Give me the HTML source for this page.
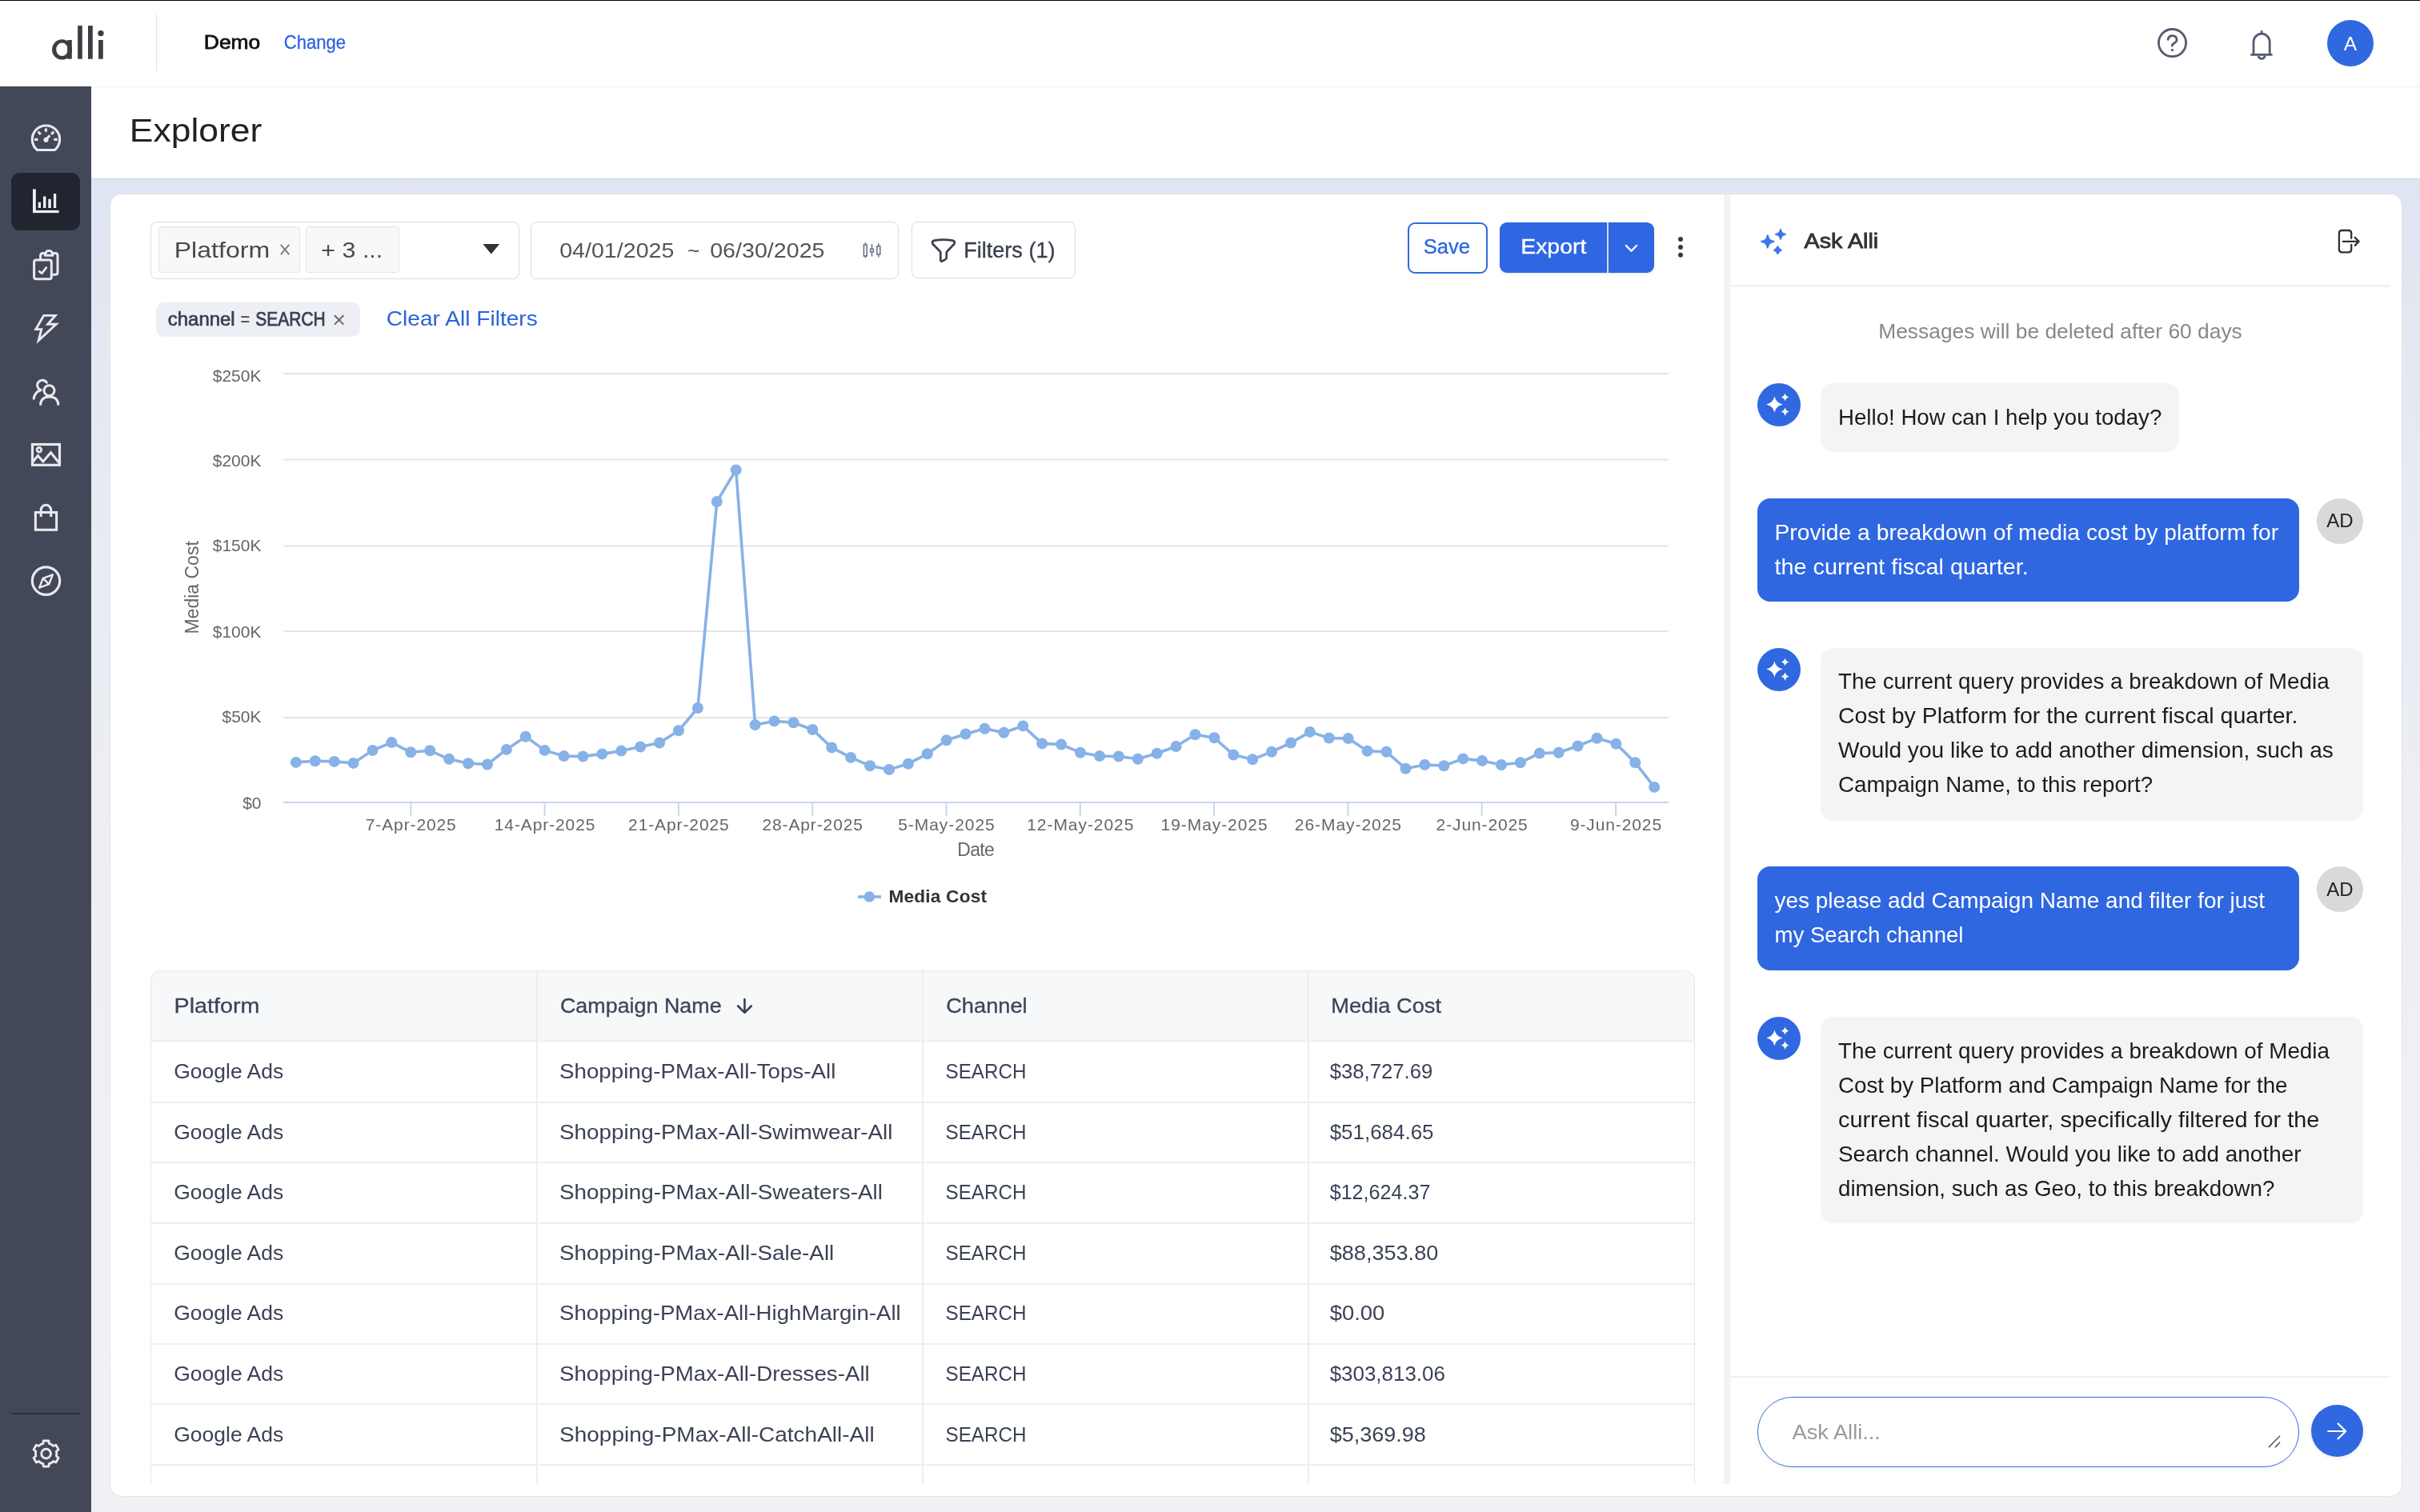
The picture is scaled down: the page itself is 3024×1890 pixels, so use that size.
<!DOCTYPE html>
<html><head><meta charset="utf-8"><title>Explorer - alli</title><style>
*{box-sizing:border-box;margin:0;padding:0}
html,body{width:3024px;height:1890px;overflow:hidden;background:#fff;font-family:"Liberation Sans", sans-serif}
.a{position:absolute}
</style></head>
<body>
<div class="a" style="left:0;top:0;width:3024px;height:1px;background:#000;z-index:5"></div>
<div class="a" style="left:0;top:1px;width:3024px;height:107px;background:#fff;box-shadow:0 1px 3px rgba(0,0,0,0.07);z-index:3"></div>
<div class="a" style="left:195px;top:18px;width:1px;height:71px;background:#E2E2E2;z-index:4"></div>
<div class="a" style="left:0;top:108px;width:114px;height:1782px;background:#434859;z-index:2"></div>
<div class="a" style="left:14px;top:216px;width:86px;height:72px;border-radius:11px;background:#21252F;z-index:2"></div>
<div class="a" style="left:14px;top:1766px;width:86px;height:2px;background:#2C303D;z-index:2"></div>
<div class="a" style="left:114px;top:223px;width:2910px;height:1667px;background:linear-gradient(180deg,#DFE5F1 0px,#E9ECF3 500px,#EFF0F4 1100px,#F0F1F5 1667px);box-shadow:inset 0 1px 1px rgba(0,0,0,0.05)"></div>
<div class="a" style="left:137px;top:242px;width:2865px;height:1629px;background:#fff;border:1px solid #E4E4E6;border-radius:15px"></div>
<!-- toolbar -->
<div class="a" style="left:188px;top:277px;width:461px;height:72px;border:1.5px solid #DCDCDC;border-radius:8px"></div>
<div class="a" style="left:198px;top:283px;width:177px;height:58px;border:1px solid #E4E4E4;background:#F8F8F8;border-radius:4px"></div>
<div class="a" style="left:382px;top:283px;width:117px;height:58px;border:1px solid #E4E4E4;background:#F8F8F8;border-radius:4px"></div>
<div class="a" style="left:663px;top:277px;width:460px;height:72px;border:1.5px solid #DCDCDC;border-radius:8px"></div>
<div class="a" style="left:1139px;top:277px;width:205px;height:71px;border:1.5px solid #DCDCDC;border-radius:8px"></div>
<div class="a" style="left:1758.5px;top:277.5px;width:100px;height:64px;border:2px solid #2F68E0;border-radius:9px"></div>
<div class="a" style="left:1873.5px;top:277.5px;width:193.5px;height:63.5px;background:#2E67E1;border-radius:9px;box-shadow:0 2px 3px rgba(0,0,0,0.08)"></div>
<div class="a" style="left:2008px;top:277.5px;width:1.5px;height:63.5px;background:#D6D9E0"></div>
<div class="a" style="left:195px;top:378px;width:255px;height:43px;background:#EEEFF5;border-radius:10px"></div>
<!-- table -->
<div class="a" style="left:188px;top:1213px;width:1930px;height:642px;border:1.5px solid #E6E7EA;border-bottom:none;border-radius:13px 13px 0 0;overflow:hidden">
  <div class="a" style="left:0;top:0;width:1930px;height:88px;background:#F7F8FA;border-bottom:1.5px solid #E6E7EA"></div>
</div>
<div class="a" style="left:670px;top:1214px;width:2px;height:641px;background:#EDEEF0"></div>
<div class="a" style="left:1152px;top:1214px;width:2px;height:641px;background:#EDEEF0"></div>
<div class="a" style="left:1634px;top:1214px;width:2px;height:641px;background:#EDEEF0"></div>
<div class="a" style="left:189px;top:1377px;width:1928px;height:2px;background:#EEEFF1"></div>
<div class="a" style="left:189px;top:1452px;width:1928px;height:2px;background:#EEEFF1"></div>
<div class="a" style="left:189px;top:1528px;width:1928px;height:2px;background:#EEEFF1"></div>
<div class="a" style="left:189px;top:1604px;width:1928px;height:2px;background:#EEEFF1"></div>
<div class="a" style="left:189px;top:1679px;width:1928px;height:2px;background:#EEEFF1"></div>
<div class="a" style="left:189px;top:1754px;width:1928px;height:2px;background:#EEEFF1"></div>
<div class="a" style="left:189px;top:1830px;width:1928px;height:2px;background:#EEEFF1"></div>
<!-- chat panel -->
<div class="a" style="left:2154px;top:243px;width:8px;height:1612px;background:#F3F3F4"></div>
<div class="a" style="left:2162px;top:355.5px;width:825px;height:2px;background:#F1F1F2;box-shadow:0 1px 2px rgba(0,0,0,0.03)"></div>
<div class="a" style="left:2196px;top:479px;width:54px;height:54px;border-radius:50%;background:#2F68E0"></div>
<div class="a" style="left:2275px;top:479px;width:448px;height:86px;border-radius:16px;background:#F4F4F4"></div>
<div class="a" style="left:2196px;top:623px;width:677px;height:129px;border-radius:16px;background:#2F67E0"></div>
<div class="a" style="left:2895px;top:623px;width:58px;height:57px;border-radius:50%;background:#D9D9D9"></div>
<div class="a" style="left:2196px;top:810px;width:54px;height:54px;border-radius:50%;background:#2F68E0"></div>
<div class="a" style="left:2275px;top:810px;width:678px;height:216px;border-radius:16px;background:#F4F4F4"></div>
<div class="a" style="left:2196px;top:1083px;width:677px;height:130px;border-radius:16px;background:#2F67E0"></div>
<div class="a" style="left:2895px;top:1083px;width:58px;height:57px;border-radius:50%;background:#D9D9D9"></div>
<div class="a" style="left:2196px;top:1271px;width:54px;height:54px;border-radius:50%;background:#2F68E0"></div>
<div class="a" style="left:2275px;top:1271px;width:678px;height:258px;border-radius:16px;background:#F4F4F4"></div>
<div class="a" style="left:2162px;top:1720px;width:825px;height:2px;background:#F0F0F1"></div>
<div class="a" style="left:2196px;top:1746px;width:676.5px;height:87.5px;border:1.5px solid #3A70E2;border-radius:44px;background:#fff;box-shadow:0 2px 5px rgba(0,0,0,0.06)"></div>
<div class="a" style="left:2888px;top:1756px;width:65px;height:65px;border-radius:50%;background:#2F68E0;box-shadow:0 2px 5px rgba(0,0,0,0.08)"></div>
<div class="a" style="left:2908px;top:25px;width:58px;height:58px;border-radius:50%;background:#2F68E0;z-index:4"></div>

<svg class="a" style="left:0;top:0;z-index:10;will-change:transform" width="3024" height="1890" viewBox="0 0 3024 1890" font-family='"Liberation Sans", sans-serif'>
<line x1="354" y1="897.0" x2="2085" y2="897.0" stroke="#E6E6E6" stroke-width="2"/>
<line x1="354" y1="789.0" x2="2085" y2="789.0" stroke="#E6E6E6" stroke-width="2"/>
<line x1="354" y1="682.5" x2="2085" y2="682.5" stroke="#E6E6E6" stroke-width="2"/>
<line x1="354" y1="574.5" x2="2085" y2="574.5" stroke="#E6E6E6" stroke-width="2"/>
<line x1="354" y1="467.0" x2="2085" y2="467.0" stroke="#E6E6E6" stroke-width="2"/>
<line x1="354" y1="1003" x2="2085" y2="1003" stroke="#CCD6EB" stroke-width="2"/>
<line x1="513.3" y1="1003" x2="513.3" y2="1020" stroke="#CCD6EB" stroke-width="2"/>
<text x="513.3" y="1037.5" font-size="21" fill="#666" text-anchor="middle" textLength="113.0" lengthAdjust="spacing">7-Apr-2025</text>
<line x1="680.6" y1="1003" x2="680.6" y2="1020" stroke="#CCD6EB" stroke-width="2"/>
<text x="680.6" y="1037.5" font-size="21" fill="#666" text-anchor="middle" textLength="125.6" lengthAdjust="spacing">14-Apr-2025</text>
<line x1="847.9" y1="1003" x2="847.9" y2="1020" stroke="#CCD6EB" stroke-width="2"/>
<text x="847.9" y="1037.5" font-size="21" fill="#666" text-anchor="middle" textLength="125.6" lengthAdjust="spacing">21-Apr-2025</text>
<line x1="1015.2" y1="1003" x2="1015.2" y2="1020" stroke="#CCD6EB" stroke-width="2"/>
<text x="1015.2" y="1037.5" font-size="21" fill="#666" text-anchor="middle" textLength="125.6" lengthAdjust="spacing">28-Apr-2025</text>
<line x1="1182.5" y1="1003" x2="1182.5" y2="1020" stroke="#CCD6EB" stroke-width="2"/>
<text x="1182.5" y="1037.5" font-size="21" fill="#666" text-anchor="middle" textLength="120.5" lengthAdjust="spacing">5-May-2025</text>
<line x1="1349.8" y1="1003" x2="1349.8" y2="1020" stroke="#CCD6EB" stroke-width="2"/>
<text x="1349.8" y="1037.5" font-size="21" fill="#666" text-anchor="middle" textLength="133.1" lengthAdjust="spacing">12-May-2025</text>
<line x1="1517.1" y1="1003" x2="1517.1" y2="1020" stroke="#CCD6EB" stroke-width="2"/>
<text x="1517.1" y="1037.5" font-size="21" fill="#666" text-anchor="middle" textLength="133.1" lengthAdjust="spacing">19-May-2025</text>
<line x1="1684.4" y1="1003" x2="1684.4" y2="1020" stroke="#CCD6EB" stroke-width="2"/>
<text x="1684.4" y="1037.5" font-size="21" fill="#666" text-anchor="middle" textLength="133.1" lengthAdjust="spacing">26-May-2025</text>
<line x1="1851.7" y1="1003" x2="1851.7" y2="1020" stroke="#CCD6EB" stroke-width="2"/>
<text x="1851.7" y="1037.5" font-size="21" fill="#666" text-anchor="middle" textLength="114.2" lengthAdjust="spacing">2-Jun-2025</text>
<line x1="2019.0" y1="1003" x2="2019.0" y2="1020" stroke="#CCD6EB" stroke-width="2"/>
<text x="2019.0" y="1037.5" font-size="21" fill="#666" text-anchor="middle" textLength="114.2" lengthAdjust="spacing">9-Jun-2025</text>
<text x="326.5" y="1010.5" font-size="21" fill="#666" text-anchor="end">$0</text>
<text x="326.5" y="903.0" font-size="21" fill="#666" text-anchor="end">$50K</text>
<text x="326.5" y="796.5" font-size="21" fill="#666" text-anchor="end">$100K</text>
<text x="326.5" y="689.0" font-size="21" fill="#666" text-anchor="end">$150K</text>
<text x="326.5" y="583.0" font-size="21" fill="#666" text-anchor="end">$200K</text>
<text x="326.5" y="477.0" font-size="21" fill="#666" text-anchor="end">$250K</text>
<text x="0" y="0" font-size="23" fill="#666" text-anchor="middle" transform="translate(247.5 734.4) rotate(-90)">Media Cost</text>
<text x="1219.5" y="1070" font-size="23" fill="#666" text-anchor="middle" textLength="46.5" lengthAdjust="spacing">Date</text>
<path d="M369.9 952.9 L393.8 951.2 L417.7 951.9 L441.6 953.9 L465.5 938.0 L489.4 928.1 L513.3 940.3 L537.2 938.3 L561.1 948.8 L585.1 954.2 L609.0 955.5 L632.9 936.9 L656.8 920.8 L680.7 937.9 L704.6 945.1 L728.5 945.5 L752.4 942.4 L776.3 938.6 L800.2 933.5 L824.1 928.5 L848.0 913.3 L871.9 885.0 L895.8 627.0 L919.7 587.4 L943.6 906.1 L967.5 901.4 L991.5 903.2 L1015.4 912.0 L1039.3 934.4 L1063.2 946.9 L1087.1 957.3 L1111.0 961.9 L1134.9 954.7 L1158.8 942.3 L1182.7 925.3 L1206.6 917.5 L1230.5 910.7 L1254.4 915.7 L1278.3 907.4 L1302.2 929.4 L1326.1 930.6 L1350.0 940.7 L1374.0 945.1 L1397.9 945.5 L1421.8 948.8 L1445.7 941.8 L1469.6 933.0 L1493.5 918.2 L1517.4 922.3 L1541.3 943.5 L1565.2 949.3 L1589.1 939.7 L1613.0 928.6 L1636.9 914.9 L1660.8 922.5 L1684.7 923.1 L1708.6 938.8 L1732.5 939.7 L1756.4 960.8 L1780.4 955.9 L1804.3 957.2 L1828.2 948.4 L1852.1 950.9 L1876.0 956.0 L1899.9 953.2 L1923.8 941.6 L1947.7 940.7 L1971.6 932.5 L1995.5 922.8 L2019.4 929.8 L2043.3 953.2 L2067.2 983.9" fill="none" stroke="#87B2E7" stroke-width="3.6" stroke-linejoin="round" stroke-linecap="round"/>
<circle cx="369.9" cy="952.9" r="7" fill="#87B2E7"/>
<circle cx="393.8" cy="951.2" r="7" fill="#87B2E7"/>
<circle cx="417.7" cy="951.9" r="7" fill="#87B2E7"/>
<circle cx="441.6" cy="953.9" r="7" fill="#87B2E7"/>
<circle cx="465.5" cy="938.0" r="7" fill="#87B2E7"/>
<circle cx="489.4" cy="928.1" r="7" fill="#87B2E7"/>
<circle cx="513.3" cy="940.3" r="7" fill="#87B2E7"/>
<circle cx="537.2" cy="938.3" r="7" fill="#87B2E7"/>
<circle cx="561.1" cy="948.8" r="7" fill="#87B2E7"/>
<circle cx="585.1" cy="954.2" r="7" fill="#87B2E7"/>
<circle cx="609.0" cy="955.5" r="7" fill="#87B2E7"/>
<circle cx="632.9" cy="936.9" r="7" fill="#87B2E7"/>
<circle cx="656.8" cy="920.8" r="7" fill="#87B2E7"/>
<circle cx="680.7" cy="937.9" r="7" fill="#87B2E7"/>
<circle cx="704.6" cy="945.1" r="7" fill="#87B2E7"/>
<circle cx="728.5" cy="945.5" r="7" fill="#87B2E7"/>
<circle cx="752.4" cy="942.4" r="7" fill="#87B2E7"/>
<circle cx="776.3" cy="938.6" r="7" fill="#87B2E7"/>
<circle cx="800.2" cy="933.5" r="7" fill="#87B2E7"/>
<circle cx="824.1" cy="928.5" r="7" fill="#87B2E7"/>
<circle cx="848.0" cy="913.3" r="7" fill="#87B2E7"/>
<circle cx="871.9" cy="885.0" r="7" fill="#87B2E7"/>
<circle cx="895.8" cy="627.0" r="7" fill="#87B2E7"/>
<circle cx="919.7" cy="587.4" r="7" fill="#87B2E7"/>
<circle cx="943.6" cy="906.1" r="7" fill="#87B2E7"/>
<circle cx="967.5" cy="901.4" r="7" fill="#87B2E7"/>
<circle cx="991.5" cy="903.2" r="7" fill="#87B2E7"/>
<circle cx="1015.4" cy="912.0" r="7" fill="#87B2E7"/>
<circle cx="1039.3" cy="934.4" r="7" fill="#87B2E7"/>
<circle cx="1063.2" cy="946.9" r="7" fill="#87B2E7"/>
<circle cx="1087.1" cy="957.3" r="7" fill="#87B2E7"/>
<circle cx="1111.0" cy="961.9" r="7" fill="#87B2E7"/>
<circle cx="1134.9" cy="954.7" r="7" fill="#87B2E7"/>
<circle cx="1158.8" cy="942.3" r="7" fill="#87B2E7"/>
<circle cx="1182.7" cy="925.3" r="7" fill="#87B2E7"/>
<circle cx="1206.6" cy="917.5" r="7" fill="#87B2E7"/>
<circle cx="1230.5" cy="910.7" r="7" fill="#87B2E7"/>
<circle cx="1254.4" cy="915.7" r="7" fill="#87B2E7"/>
<circle cx="1278.3" cy="907.4" r="7" fill="#87B2E7"/>
<circle cx="1302.2" cy="929.4" r="7" fill="#87B2E7"/>
<circle cx="1326.1" cy="930.6" r="7" fill="#87B2E7"/>
<circle cx="1350.0" cy="940.7" r="7" fill="#87B2E7"/>
<circle cx="1374.0" cy="945.1" r="7" fill="#87B2E7"/>
<circle cx="1397.9" cy="945.5" r="7" fill="#87B2E7"/>
<circle cx="1421.8" cy="948.8" r="7" fill="#87B2E7"/>
<circle cx="1445.7" cy="941.8" r="7" fill="#87B2E7"/>
<circle cx="1469.6" cy="933.0" r="7" fill="#87B2E7"/>
<circle cx="1493.5" cy="918.2" r="7" fill="#87B2E7"/>
<circle cx="1517.4" cy="922.3" r="7" fill="#87B2E7"/>
<circle cx="1541.3" cy="943.5" r="7" fill="#87B2E7"/>
<circle cx="1565.2" cy="949.3" r="7" fill="#87B2E7"/>
<circle cx="1589.1" cy="939.7" r="7" fill="#87B2E7"/>
<circle cx="1613.0" cy="928.6" r="7" fill="#87B2E7"/>
<circle cx="1636.9" cy="914.9" r="7" fill="#87B2E7"/>
<circle cx="1660.8" cy="922.5" r="7" fill="#87B2E7"/>
<circle cx="1684.7" cy="923.1" r="7" fill="#87B2E7"/>
<circle cx="1708.6" cy="938.8" r="7" fill="#87B2E7"/>
<circle cx="1732.5" cy="939.7" r="7" fill="#87B2E7"/>
<circle cx="1756.4" cy="960.8" r="7" fill="#87B2E7"/>
<circle cx="1780.4" cy="955.9" r="7" fill="#87B2E7"/>
<circle cx="1804.3" cy="957.2" r="7" fill="#87B2E7"/>
<circle cx="1828.2" cy="948.4" r="7" fill="#87B2E7"/>
<circle cx="1852.1" cy="950.9" r="7" fill="#87B2E7"/>
<circle cx="1876.0" cy="956.0" r="7" fill="#87B2E7"/>
<circle cx="1899.9" cy="953.2" r="7" fill="#87B2E7"/>
<circle cx="1923.8" cy="941.6" r="7" fill="#87B2E7"/>
<circle cx="1947.7" cy="940.7" r="7" fill="#87B2E7"/>
<circle cx="1971.6" cy="932.5" r="7" fill="#87B2E7"/>
<circle cx="1995.5" cy="922.8" r="7" fill="#87B2E7"/>
<circle cx="2019.4" cy="929.8" r="7" fill="#87B2E7"/>
<circle cx="2043.3" cy="953.2" r="7" fill="#87B2E7"/>
<circle cx="2067.2" cy="983.9" r="7" fill="#87B2E7"/>
<line x1="1072" y1="1121" x2="1101" y2="1121" stroke="#87B2E7" stroke-width="3.6"/>
<circle cx="1086.4" cy="1121" r="6.8" fill="#87B2E7"/>
<text x="1110.5" y="1127.9" font-size="22.7" font-weight="700" fill="#333" textLength="122.5" lengthAdjust="spacing">Media Cost</text>
<g fill="#3C3D42"><path fill-rule="evenodd" d="M77.5 49.3 A12.45 12.65 0 1 0 77.5 74.6 A12.45 12.65 0 1 0 77.5 49.3 Z M77.5 53.6 A7.3 8.25 0 1 1 77.5 70.1 A7.3 8.25 0 1 1 77.5 53.6 Z"/><rect x="84.2" y="50" width="5.6" height="23.7"/><rect x="97.1" y="32.1" width="5.7" height="41.6"/><rect x="110" y="32.1" width="5.8" height="41.6"/><rect x="123.1" y="50" width="5.7" height="23.7"/><circle cx="125.95" cy="41.6" r="3.7"/></g>
<g fill="none" stroke="#E8E9EE" stroke-width="3.1" stroke-linecap="butt" stroke-linejoin="round"><path d="M46.6 187.5 A17.2 17.2 0 1 1 68.3 187.5 Z"/><path d="M57.4 160.5 V164.8 M47.6 164.6 L50.8 167.8 M67.3 164.6 L64.1 167.8 M43 174.4 H47.4 M67.4 174.4 H71.8"/><path d="M57.4 174.6 L62.3 169.3" stroke-width="3"/></g><circle cx="57.5" cy="174.8" r="3.1" fill="#E8E9EE"/><g fill="#EEEFF3"><rect x="41" y="236.4" width="3.8" height="29.7"/><rect x="41" y="262.9" width="32.6" height="3.2"/><rect x="47.7" y="252.7" width="3.3" height="7.3"/><rect x="54" y="245.5" width="3.4" height="14.5"/><rect x="60.3" y="248.8" width="3.5" height="11.2"/><rect x="66.9" y="242" width="3.3" height="18"/></g><g fill="none" stroke="#E8E9EE" stroke-width="3" stroke-linejoin="round" stroke-linecap="round"><path d="M50.6 323.4 V319.5 Q50.6 316.5 53.6 316.5 H56.2 M66 316.5 H69 Q72 316.5 72 319.5 V340.2 Q72 343.2 69 343.2 H65.8"/><path d="M56.2 319.2 L57.6 315.2 Q58.3 313.6 60 313.6 H62.3 Q64 313.6 64.7 315.2 L66.1 319.2 Z"/><rect x="42.6" y="324.9" width="21.7" height="23.9" rx="2.5"/><path d="M49.2 339.3 L52.3 341.6 L57.8 334.6" stroke-width="2.8"/><path d="M54.7 394.4 H69.2 L59.6 405.2 H70.2 L48.2 425.6 L51.8 411.6 H44.8 Z" stroke-linejoin="miter" stroke-miterlimit="4" stroke-width="2.9"/><path d="M58.4 478.3 A6.3 6.3 0 1 0 51.2 487.5 Q43.2 490 42.2 498.2" stroke-width="3"/><circle cx="61.5" cy="488.2" r="6.5"/><path d="M50.6 505.4 Q51.5 496 61.7 496 Q71.9 496 72.8 505.4"/><rect x="40.5" y="555.5" width="34" height="25.8" stroke-linejoin="miter" stroke-width="3.2"/><circle cx="48.9" cy="562.3" r="2.8" stroke-width="2.8"/><path d="M41.3 577 L47.4 569.6 L53.8 577 L63.5 565.7 L73.8 578.5" stroke-linejoin="miter" stroke-linecap="butt"/><rect x="44.35" y="640.5" width="26.3" height="21.8" stroke-linejoin="miter" stroke-width="3.1"/><path d="M51.2 645.9 V637.6 A6.25 6.25 0 0 1 63.7 637.6 V645.9" stroke-linecap="butt"/><circle cx="57.5" cy="726.1" r="17.2" stroke-width="3.2"/><path d="M49.2 734.6 L53.8 722.8 L65.8 718.4 L61.2 730.2 Z M54.2 723.2 L60.8 729.8" stroke-width="2.5"/><path d="M53.85 1804.44 L54.33 1801.03 L60.87 1801.03 L61.35 1804.44 A13.2 13.2 0 0 1 66.69 1807.53 L69.88 1806.23 L73.15 1811.90 L70.44 1814.02 A13.2 13.2 0 0 1 70.44 1820.18 L73.15 1822.30 L69.88 1827.97 L66.69 1826.67 A13.2 13.2 0 0 1 61.35 1829.76 L60.87 1833.17 L54.33 1833.17 L53.85 1829.76 A13.2 13.2 0 0 1 48.51 1826.67 L45.32 1827.97 L42.05 1822.30 L44.76 1820.18 A13.2 13.2 0 0 1 44.76 1814.02 L42.05 1811.90 L45.32 1806.23 L48.51 1807.53 A13.2 13.2 0 0 1 53.85 1804.44 Z" stroke-width="2.9"/><circle cx="57.6" cy="1817.1" r="5.9" stroke-width="2.9"/></g>
<g fill="none" stroke="#555B70" stroke-width="2.8" stroke-linecap="round" stroke-linejoin="round"><circle cx="2714.5" cy="53.6" r="17.1"/><path d="M2709.1 49.3 Q2709.8 44.6 2714.7 44.6 Q2719.9 44.8 2720 49.6 Q2720 52.4 2716.8 54 Q2714.3 55.3 2714.3 57.2"/><path d="M2816 68 V52.3 A10.1 10.1 0 0 1 2836.2 52.3 V68 M2812.4 68.4 H2839.6 M2826.1 42 V38.2" stroke-linecap="butt"/><path d="M2822.2 69.5 A3.9 3.9 0 0 0 2830 69.5" stroke-linecap="butt"/></g><circle cx="2714.5" cy="62.6" r="1.7" fill="#555B70"/>
<path d="M350.8 305.8 L361.3 318.2 M361.3 305.8 L350.8 318.2" stroke="#777" stroke-width="1.8" fill="none"/>
<path d="M603.4 305 H624.2 L613.8 317.6 Z" fill="#333"/>
<g fill="none" stroke="#6B7390" stroke-width="1.6"><rect x="1079.4" y="306" width="3.8" height="14"/><path d="M1081.3 303.3 V306 M1081.3 320 V322.6"/><rect x="1087.6" y="311.2" width="3.8" height="3.6"/><path d="M1089.5 305.2 V311.2 M1089.5 314.8 V320.5"/><rect x="1095.8" y="307.8" width="4" height="10"/><path d="M1097.8 304.3 V307.8 M1097.8 317.8 V321.6"/></g>
<path d="M1167.5 300.6 Q1164.6 301.2 1165.2 304.2 Q1165.5 305 1166.3 305.8 L1174.6 314.3 Q1175.3 315 1175.3 316 V325 Q1175.5 327.3 1177.6 326.3 L1180.9 324.6 Q1182.8 323.6 1182.8 321.4 V316 Q1182.8 315 1183.5 314.3 L1191.6 305.8 Q1192.4 305 1192.7 304.2 Q1193.3 301.2 1190.4 300.6 Q1179 298.6 1167.5 300.6 Z" fill="none" stroke="#3A3F52" stroke-width="2.7" stroke-linejoin="round"/>
<path d="M2031.2 306.3 L2038.5 313.6 L2045.8 306.3" fill="none" stroke="#fff" stroke-width="2.2"/>
<g fill="#3A3A3A"><circle cx="2100" cy="299.1" r="3"/><circle cx="2100" cy="309" r="3"/><circle cx="2100" cy="318.8" r="3"/></g>
<path d="M418 394.3 L429.3 405.6 M429.3 394.3 L418 405.6" stroke="#666" stroke-width="2" fill="none"/>
<path d="M930.5 1249 V1265.6 M922.2 1257.5 L930.5 1265.8 L938.8 1257.5" fill="none" stroke="#3A3F52" stroke-width="2.6" stroke-linecap="round" stroke-linejoin="round"/>
<g fill="#3A78EA" stroke="#3A78EA" stroke-width="2.2" stroke-linejoin="round"><path d="M2208.8 294.29999999999995 Q2209.5600000000004 301.14 2216.4 301.9 Q2209.5600000000004 302.65999999999997 2208.8 309.5 Q2208.04 302.65999999999997 2201.2000000000003 301.9 Q2208.04 301.14 2208.8 294.29999999999995 Z"/><path d="M2225 287.2 Q2225.58 292.33 2230.8 292.9 Q2225.58 293.46999999999997 2225 298.59999999999997 Q2224.42 293.46999999999997 2219.2 292.9 Q2224.42 292.33 2225 287.2 Z"/><path d="M2221.4 308.4 Q2222.346 311.75399999999996 2225.7000000000003 312.7 Q2222.346 313.646 2221.4 317.0 Q2220.454 313.646 2217.1 312.7 Q2220.454 311.75399999999996 2221.4 308.4 Z"/></g>
<path d="M2938.2 297.8 V291.6 Q2938.2 288 2934.6 288 H2926.5 Q2922.9 288 2922.9 291.6 V311.8 Q2922.9 315.4 2926.5 315.4 H2934.6 Q2938.2 315.4 2938.2 311.8 V306 M2927.9 301.9 H2947.3 M2942.7 296.9 L2947.6 301.9 L2942.7 306.9" fill="none" stroke="#333" stroke-width="2.3" stroke-linecap="round" stroke-linejoin="round"/>
<g fill="#fff"><path d="M2217.4 495.4 Q2219.254 503.59999999999997 2227.7000000000003 505.4 Q2219.254 507.2 2217.4 515.4 Q2215.5460000000003 507.2 2207.1 505.4 Q2215.5460000000003 503.59999999999997 2217.4 495.4 Z"/><path d="M2230.6 491.4 Q2231.464 495.5 2235.4 496.4 Q2231.464 497.29999999999995 2230.6 501.4 Q2229.736 497.29999999999995 2225.7999999999997 496.4 Q2229.736 495.5 2230.6 491.4 Z"/><path d="M2230.6 509.20000000000005 Q2231.554 513.628 2235.9 514.6 Q2231.554 515.572 2230.6 520.0 Q2229.6459999999997 515.572 2225.2999999999997 514.6 Q2229.6459999999997 513.628 2230.6 509.20000000000005 Z"/></g>
<g fill="#fff"><path d="M2217.4 826.3999999999999 Q2219.254 834.5999999999999 2227.7000000000003 836.3999999999999 Q2219.254 838.1999999999998 2217.4 846.3999999999999 Q2215.5460000000003 838.1999999999998 2207.1 836.3999999999999 Q2215.5460000000003 834.5999999999999 2217.4 826.3999999999999 Z"/><path d="M2230.6 822.3999999999999 Q2231.464 826.4999999999999 2235.4 827.3999999999999 Q2231.464 828.2999999999998 2230.6 832.3999999999999 Q2229.736 828.2999999999998 2225.7999999999997 827.3999999999999 Q2229.736 826.4999999999999 2230.6 822.3999999999999 Z"/><path d="M2230.6 840.1999999999999 Q2231.554 844.6279999999999 2235.9 845.5999999999999 Q2231.554 846.5719999999999 2230.6 850.9999999999999 Q2229.6459999999997 846.5719999999999 2225.2999999999997 845.5999999999999 Q2229.6459999999997 844.6279999999999 2230.6 840.1999999999999 Z"/></g>
<g fill="#fff"><path d="M2217.4 1287.4 Q2219.254 1295.6000000000001 2227.7000000000003 1297.4 Q2219.254 1299.2 2217.4 1307.4 Q2215.5460000000003 1299.2 2207.1 1297.4 Q2215.5460000000003 1295.6000000000001 2217.4 1287.4 Z"/><path d="M2230.6 1283.4 Q2231.464 1287.5 2235.4 1288.4 Q2231.464 1289.3000000000002 2230.6 1293.4 Q2229.736 1289.3000000000002 2225.7999999999997 1288.4 Q2229.736 1287.5 2230.6 1283.4 Z"/><path d="M2230.6 1301.1999999999998 Q2231.554 1305.628 2235.9 1306.6 Q2231.554 1307.572 2230.6 1312.0 Q2229.6459999999997 1307.572 2225.2999999999997 1306.6 Q2229.6459999999997 1305.628 2230.6 1301.1999999999998 Z"/></g>
<path d="M2909.2 1789 H2931 M2921.6 1779.5 L2931.2 1789 L2921.6 1798.4" fill="none" stroke="#fff" stroke-width="2.2" stroke-linecap="round" stroke-linejoin="round"/>
<path d="M2835.3 1808.8 L2848.6 1795.3 M2843.4 1808.8 L2848.6 1803.2" fill="none" stroke="#555" stroke-width="1.6" stroke-linecap="round"/>
<text x="254.8" y="60.8" font-size="24.5" fill="#111" textLength="70.5" lengthAdjust="spacingAndGlyphs" stroke="#111" stroke-width="0.8">Demo</text><text x="354.8" y="60.8" font-size="24.5" fill="#2F62E0" textLength="77.3" lengthAdjust="spacingAndGlyphs" stroke="#2F62E0" stroke-width="0.3">Change</text><text x="2937.0" y="62.5" font-size="24.5" fill="#fff" text-anchor="middle">A</text><text x="161.8" y="177.0" font-size="41.5" fill="#222" textLength="165.5" lengthAdjust="spacingAndGlyphs">Explorer</text><text x="217.7" y="321.8" font-size="27.3" fill="#4A4A4A" textLength="119.6" lengthAdjust="spacingAndGlyphs">Platform</text><text x="401.2" y="321.8" font-size="27.3" fill="#4A4A4A" textLength="77.1" lengthAdjust="spacingAndGlyphs">+ 3 ...</text><text x="699.2" y="321.5" font-size="26" fill="#555" textLength="143.2" lengthAdjust="spacingAndGlyphs">04/01/2025</text><text x="859.0" y="321.5" font-size="26" fill="#555">~</text><text x="887.2" y="321.5" font-size="26" fill="#555" textLength="143.3" lengthAdjust="spacingAndGlyphs">06/30/2025</text><text x="1204.2" y="321.5" font-size="27" fill="#3A3F4F" textLength="114.3" lengthAdjust="spacingAndGlyphs" stroke="#3A3F4F" stroke-width="0.35">Filters (1)</text><text x="1778.8" y="317.2" font-size="25.7" fill="#2F68E0" textLength="58.3" lengthAdjust="spacingAndGlyphs" stroke="#2F68E0" stroke-width="0.35">Save</text><text x="1900.2" y="317.2" font-size="25.7" fill="#fff" textLength="82.1" lengthAdjust="spacingAndGlyphs" stroke="#fff" stroke-width="0.35">Export</text><text x="209.8" y="406.8" font-size="23" fill="#3A3F52" textLength="83.9" lengthAdjust="spacingAndGlyphs" stroke="#3A3F52" stroke-width="0.7">channel</text><text x="300.3" y="406.8" font-size="23" fill="#3A3F52" textLength="12.1" lengthAdjust="spacingAndGlyphs">=</text><text x="319.3" y="406.8" font-size="23" fill="#3A3F52" textLength="87.4" lengthAdjust="spacingAndGlyphs" stroke="#3A3F52" stroke-width="0.75">SEARCH</text><text x="482.7" y="407.0" font-size="26" fill="#2A62D9" textLength="189.1" lengthAdjust="spacingAndGlyphs">Clear All Filters</text><text x="217.6" y="1266.0" font-size="25.7" fill="#3D4459" textLength="106.9" lengthAdjust="spacingAndGlyphs" stroke="#3D4459" stroke-width="0.3">Platform</text><text x="699.9" y="1266.0" font-size="25.7" fill="#3D4459" textLength="201.8" lengthAdjust="spacingAndGlyphs" stroke="#3D4459" stroke-width="0.3">Campaign Name</text><text x="1182.2" y="1266.0" font-size="25.7" fill="#3D4459" textLength="101.5" lengthAdjust="spacingAndGlyphs" stroke="#3D4459" stroke-width="0.3">Channel</text><text x="1663.2" y="1266.0" font-size="25.7" fill="#3D4459" textLength="137.8" lengthAdjust="spacingAndGlyphs" stroke="#3D4459" stroke-width="0.3">Media Cost</text><text x="217.2" y="1348.0" font-size="25.7" fill="#3B4256" textLength="137.1" lengthAdjust="spacingAndGlyphs">Google Ads</text><text x="699.0" y="1348.0" font-size="25.7" fill="#3B4256" textLength="345.3" lengthAdjust="spacingAndGlyphs">Shopping-PMax-All-Tops-All</text><text x="1181.6" y="1348.0" font-size="25.7" fill="#3B4256" textLength="100.8" lengthAdjust="spacingAndGlyphs">SEARCH</text><text x="1661.7" y="1348.0" font-size="25.7" fill="#3B4256" textLength="128.6" lengthAdjust="spacingAndGlyphs">$38,727.69</text><text x="217.2" y="1423.6" font-size="25.7" fill="#3B4256" textLength="137.1" lengthAdjust="spacingAndGlyphs">Google Ads</text><text x="699.0" y="1423.6" font-size="25.7" fill="#3B4256" textLength="416.4" lengthAdjust="spacingAndGlyphs">Shopping-PMax-All-Swimwear-All</text><text x="1181.6" y="1423.6" font-size="25.7" fill="#3B4256" textLength="100.8" lengthAdjust="spacingAndGlyphs">SEARCH</text><text x="1661.7" y="1423.6" font-size="25.7" fill="#3B4256" textLength="129.8" lengthAdjust="spacingAndGlyphs">$51,684.65</text><text x="217.2" y="1499.2" font-size="25.7" fill="#3B4256" textLength="137.1" lengthAdjust="spacingAndGlyphs">Google Ads</text><text x="699.0" y="1499.2" font-size="25.7" fill="#3B4256" textLength="404.0" lengthAdjust="spacingAndGlyphs">Shopping-PMax-All-Sweaters-All</text><text x="1181.6" y="1499.2" font-size="25.7" fill="#3B4256" textLength="100.8" lengthAdjust="spacingAndGlyphs">SEARCH</text><text x="1661.7" y="1499.2" font-size="25.7" fill="#3B4256" textLength="125.7" lengthAdjust="spacingAndGlyphs">$12,624.37</text><text x="217.2" y="1574.8" font-size="25.7" fill="#3B4256" textLength="137.1" lengthAdjust="spacingAndGlyphs">Google Ads</text><text x="699.0" y="1574.8" font-size="25.7" fill="#3B4256" textLength="343.3" lengthAdjust="spacingAndGlyphs">Shopping-PMax-All-Sale-All</text><text x="1181.6" y="1574.8" font-size="25.7" fill="#3B4256" textLength="100.8" lengthAdjust="spacingAndGlyphs">SEARCH</text><text x="1661.7" y="1574.8" font-size="25.7" fill="#3B4256" textLength="135.6" lengthAdjust="spacingAndGlyphs">$88,353.80</text><text x="217.2" y="1650.4" font-size="25.7" fill="#3B4256" textLength="137.1" lengthAdjust="spacingAndGlyphs">Google Ads</text><text x="699.0" y="1650.4" font-size="25.7" fill="#3B4256" textLength="426.7" lengthAdjust="spacingAndGlyphs">Shopping-PMax-All-HighMargin-All</text><text x="1181.6" y="1650.4" font-size="25.7" fill="#3B4256" textLength="100.8" lengthAdjust="spacingAndGlyphs">SEARCH</text><text x="1661.7" y="1650.4" font-size="25.7" fill="#3B4256" textLength="68.6" lengthAdjust="spacingAndGlyphs">$0.00</text><text x="217.2" y="1726.0" font-size="25.7" fill="#3B4256" textLength="137.1" lengthAdjust="spacingAndGlyphs">Google Ads</text><text x="699.0" y="1726.0" font-size="25.7" fill="#3B4256" textLength="387.7" lengthAdjust="spacingAndGlyphs">Shopping-PMax-All-Dresses-All</text><text x="1181.6" y="1726.0" font-size="25.7" fill="#3B4256" textLength="100.8" lengthAdjust="spacingAndGlyphs">SEARCH</text><text x="1661.7" y="1726.0" font-size="25.7" fill="#3B4256" textLength="144.2" lengthAdjust="spacingAndGlyphs">$303,813.06</text><text x="217.2" y="1801.6" font-size="25.7" fill="#3B4256" textLength="137.1" lengthAdjust="spacingAndGlyphs">Google Ads</text><text x="699.0" y="1801.6" font-size="25.7" fill="#3B4256" textLength="393.7" lengthAdjust="spacingAndGlyphs">Shopping-PMax-All-CatchAll-All</text><text x="1181.6" y="1801.6" font-size="25.7" fill="#3B4256" textLength="100.8" lengthAdjust="spacingAndGlyphs">SEARCH</text><text x="1661.7" y="1801.6" font-size="25.7" fill="#3B4256" textLength="120.2" lengthAdjust="spacingAndGlyphs">$5,369.98</text><text x="2254.6" y="310.4" font-size="26.6" fill="#333" textLength="92.6" lengthAdjust="spacingAndGlyphs" stroke="#333" stroke-width="0.85">Ask Alli</text><text x="2347.2" y="422.5" font-size="26" fill="#888" textLength="454.6" lengthAdjust="spacingAndGlyphs">Messages will be deleted after 60 days</text><text x="2297.0" y="531.2" font-size="27.6" fill="#1C1C1F" textLength="404.3" lengthAdjust="spacingAndGlyphs">Hello! How can I help you today?</text><text x="2217.5" y="675.2" font-size="27.6" fill="#fff" textLength="629.6" lengthAdjust="spacingAndGlyphs">Provide a breakdown of media cost by platform for</text><text x="2217.5" y="718.2" font-size="27.6" fill="#fff" textLength="317.2" lengthAdjust="spacingAndGlyphs">the current fiscal quarter.</text><text x="2297.0" y="861.0" font-size="27.6" fill="#1C1C1F" textLength="613.6" lengthAdjust="spacingAndGlyphs">The current query provides a breakdown of Media</text><text x="2297.0" y="904.0" font-size="27.6" fill="#1C1C1F" textLength="574.4" lengthAdjust="spacingAndGlyphs">Cost by Platform for the current fiscal quarter.</text><text x="2297.0" y="947.0" font-size="27.6" fill="#1C1C1F" textLength="618.9" lengthAdjust="spacingAndGlyphs">Would you like to add another dimension, such as</text><text x="2297.0" y="990.0" font-size="27.6" fill="#1C1C1F" textLength="393.2" lengthAdjust="spacingAndGlyphs">Campaign Name, to this report?</text><text x="2217.5" y="1135.4" font-size="27.6" fill="#fff" textLength="612.6" lengthAdjust="spacingAndGlyphs">yes please add Campaign Name and filter for just</text><text x="2217.5" y="1178.4" font-size="27.6" fill="#fff" textLength="236.0" lengthAdjust="spacingAndGlyphs">my Search channel</text><text x="2297.0" y="1322.8" font-size="27.6" fill="#1C1C1F" textLength="614.0" lengthAdjust="spacingAndGlyphs">The current query provides a breakdown of Media</text><text x="2297.0" y="1365.8" font-size="27.6" fill="#1C1C1F" textLength="561.5" lengthAdjust="spacingAndGlyphs">Cost by Platform and Campaign Name for the</text><text x="2297.0" y="1408.8" font-size="27.6" fill="#1C1C1F" textLength="601.3" lengthAdjust="spacingAndGlyphs">current fiscal quarter, specifically filtered for the</text><text x="2297.0" y="1451.8" font-size="27.6" fill="#1C1C1F" textLength="578.5" lengthAdjust="spacingAndGlyphs">Search channel. Would you like to add another</text><text x="2297.0" y="1494.8" font-size="27.6" fill="#1C1C1F" textLength="545.4" lengthAdjust="spacingAndGlyphs">dimension, such as Geo, to this breakdown?</text><text x="2924.0" y="659.0" font-size="23.3" fill="#222" text-anchor="middle" textLength="33.4" lengthAdjust="spacingAndGlyphs">AD</text><text x="2924.0" y="1119.7" font-size="23.3" fill="#222" text-anchor="middle" textLength="33.4" lengthAdjust="spacingAndGlyphs">AD</text><text x="2239.6" y="1799.0" font-size="25.7" fill="#9A9A9A" textLength="110.3" lengthAdjust="spacingAndGlyphs">Ask Alli...</text>
</svg>
</body></html>
